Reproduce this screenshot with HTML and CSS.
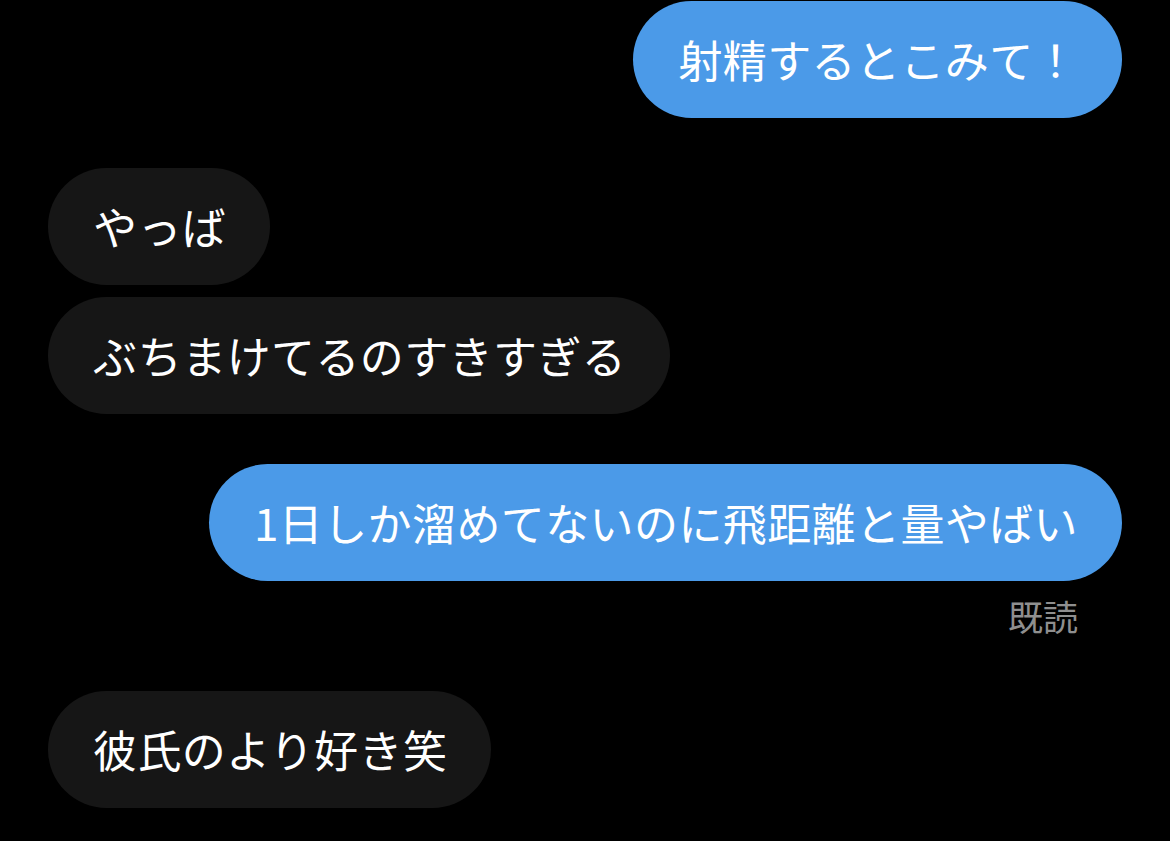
FILE: index.html
```html
<!DOCTYPE html>
<html lang="ja">
<head>
<meta charset="utf-8">
<link rel="stylesheet" href="styles.css">
</head>
<body>
<main class="chat">
  <div class="row out first"><div class="bubble blue">射精するとこみて！</div></div>
  <div class="row in gap-lg"><div class="bubble dark">やっば</div></div>
  <div class="row in gap-sm"><div class="bubble dark">ぶちまけてるのすきすぎる</div></div>
  <div class="row out gap-lg"><div class="bubble blue">1日しか溜めてないのに飛距離と量やばい</div></div>
  <div class="read">既読</div>
  <div class="row in after-read"><div class="bubble dark">彼氏のより好き笑</div></div>
</main>
</body>
</html>
```
FILE: styles.css
```css
html, body {
  margin: 0;
  padding: 0;
  background: #000;
  height: 100%;
  overflow: hidden;
}
.chat {
  display: flex;
  flex-direction: column;
  padding: 1px 48px 0 48px;
  font-family: "Noto Sans CJK JP", "Noto Sans", sans-serif;
}
.row {
  display: flex;
}
.row.out { justify-content: flex-end; }
.row.in { justify-content: flex-start; }
.gap-lg { margin-top: 50px; }
.gap-sm { margin-top: 12px; }
.after-read { margin-top: 55px; }
.bubble {
  font-size: 44px;
  letter-spacing: 0.4px;
  line-height: 117px;
  height: 117px;
  padding: 0 44px 0 45px;
  border-radius: 59px;
  color: #fff;
  white-space: nowrap;
  box-sizing: border-box;
}
.blue { background: #4b9ae8; }
.dark { background: #161616; }
.read {
  align-self: flex-end;
  margin-top: 15px;
  margin-right: 44px;
  font-size: 35px;
  line-height: 40px;
  color: #8f8f8f;
}
```
